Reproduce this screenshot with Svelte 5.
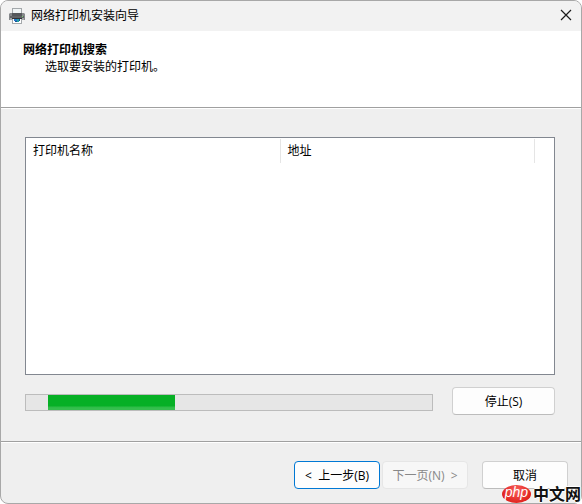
<script>
  let printers = $state([]);
  let searching = $state(true);
  let offset = $state(22);

  const chunk = 127;
  const track = 406;

  function stopSearch() {
    searching = false;
  }
</script>

<div class="window">
  <header class="titlebar">
    <svg class="app-icon" viewBox="0 0 16 16" width="16" height="16" aria-hidden="true">
      <rect x="3.5" y="0.5" width="9" height="6" fill="#f1f5f6" stroke="#a3a8ab" />
      <path d="M1 5h2v1h10V5h2l1 1v6H0V6z" fill="#85888b" />
      <path d="M3 5h10v3H3z" fill="#55585b" />
      <path d="M1 8h14v2H1z" fill="#606366" />
      <path d="M1 10h14v2H1z" fill="#a3a6a8" />
      <path d="M3 10h10v1H3z" fill="#303336" />
      <path d="M3 11h10v5H3z" fill="#a5a9ac" />
      <path d="M4 11h8v4H4z" fill="#fff" />
      <path d="M5 11h3v2H5z" fill="#2375c9" />
      <path d="M8 11h2v3H8z" fill="#24a1a0" />
      <path d="M6 13h2v1H6zM10 11h1v2h-1z" fill="#194f91" />
      <path d="M13 8h1v1h-1z" fill="#77d36f" />
    </svg>
    <span class="title">网络打印机安装向导</span>
    <button class="close" aria-label="关闭">
      <svg viewBox="0 0 12 12" width="12" height="12" aria-hidden="true">
        <path d="M1 1l10 10M11 1L1 11" stroke="#1a1a1a" stroke-width="1.2" fill="none" />
      </svg>
    </button>
  </header>

  <section class="heading">
    <h1>网络打印机搜索</h1>
    <p>选取要安装的打印机。</p>
  </section>

  <main>
    <div class="list">
      <table>
        <thead>
          <tr>
            <th>打印机名称</th>
            <th>地址</th>
            <td class="rest"></td>
          </tr>
        </thead>
        <tbody>
          {#each printers as printer}
            <tr>
              <td>{printer.name}</td>
              <td>{printer.address}</td>
              <td></td>
            </tr>
          {/each}
        </tbody>
      </table>
    </div>

    <div class="search-row">
      <div class="progress" role="progressbar" aria-label="正在搜索">
        {#if searching}
          <div
            class="chunk"
            style="margin-left: {(offset / track) * 100}%; width: {(chunk / track) * 100}%"
          ></div>
        {/if}
      </div>
      <button class="btn stop" onclick={stopSearch}>停止(S)</button>
    </div>
  </main>

  <footer>
    <button class="btn default">&lt;&nbsp; 上一步(B)</button>
    <button class="btn next" disabled>下一页(N)&nbsp; &gt;</button>
    <button class="btn cancel">取消</button>
  </footer>

  <div class="watermark">
    <span class="php">php</span>
    <span class="site">中文网</span>
  </div>
</div>

<style>
  :global(body) {
    background: #fff;
  }

  .window {
    position: relative;
    box-sizing: border-box;
    min-height: 100vh;
    display: flex;
    flex-direction: column;
    background: #efefef;
    border: 1px solid #a8a8a8;
    border-radius: 8px;
    color: #000;
    font-family: "Open Sans", "Noto Sans CJK SC", sans-serif;
    font-size: 12px;
    line-height: 17px;
  }

  .titlebar {
    display: flex;
    align-items: center;
    height: 30px;
    padding-left: 8px;
    background: #f2f2f2;
    border-radius: 7px 7px 0 0;
  }

  .app-icon {
    margin-right: 6px;
  }

  .title {
    flex: 1;
    padding-bottom: 2px;
  }

  .close {
    display: flex;
    align-items: center;
    justify-content: center;
    width: 30px;
    height: 30px;
    padding: 0 0 2px;
    border: none;
    background: none;
  }

  .heading {
    min-height: 66px;
    padding: 10px 22px 0;
    background: #fff;
    border-bottom: 1px solid #a0a0a0;
    box-shadow: 0 1px 0 #fff;
  }

  h1 {
    margin: 0;
    font-size: 12px;
    font-weight: 700;
  }

  p {
    margin: 0;
    padding-left: 22px;
  }

  main {
    flex: 1;
    display: flex;
    flex-direction: column;
    gap: 12px;
    padding: 29px 26px 26px 24px;
  }

  .list {
    flex: 1;
    background: #fff;
    border: 1px solid #828790;
  }

  table {
    width: 100%;
    margin-top: 1px;
    border-collapse: separate;
    border-spacing: 0;
    table-layout: fixed;
  }

  th {
    height: 22px;
    padding: 0 7px 2px;
    border-right: 1px solid #e5e5e5;
    font-weight: 400;
    text-align: left;
  }

  .rest {
    width: 19px;
    padding: 0;
  }

  .search-row {
    display: flex;
    align-items: center;
    gap: 19px;
  }

  .progress {
    flex: 1;
    height: 15px;
    margin-top: 2px;
    border: 1px solid #bcbcbc;
    background: #e6e6e6;
  }

  .chunk {
    height: 100%;
    background: linear-gradient(#06b025 70%, #35bf4d 85%);
  }

  .btn {
    box-sizing: border-box;
    width: 86px;
    height: 28px;
    padding: 0;
    border: 1px solid #d0d0d0;
    border-bottom-color: #bcbcbc;
    border-radius: 4px;
    background: #fdfdfd;
    color: #000;
    font: inherit;
  }

  .stop {
    width: 103px;
  }

  .default {
    border-color: #0078d4;
  }

  .btn:disabled {
    border-color: #e6e6e6;
    background: #f7f7f7;
    color: #888;
  }

  footer {
    display: flex;
    justify-content: flex-end;
    padding: 19px 13px 14px;
    border-top: 1px solid #a0a0a0;
    box-shadow: inset 0 1px 0 #fff;
  }

  .next {
    margin: 0 14px 0 2px;
  }

  .watermark {
    position: absolute;
    right: 0;
    bottom: 0;
    display: flex;
    align-items: center;
    gap: 2px;
    height: 18px;
    pointer-events: none;
  }

  .php {
    width: 29px;
    height: 18px;
    border-radius: 50%;
    background: radial-gradient(ellipse at 50% 30%, #f8605c, #e0201c 75%);
    color: #fff;
    font: italic 400 14px/15px "Liberation Sans", sans-serif;
    text-align: center;
  }

  .site {
    padding-bottom: 2px;
    color: #111;
    font: 700 16px/16px "Noto Sans CJK SC", sans-serif;
    text-shadow: 1px 0 #fff, -1px 0 #fff, 0 1px #fff, 0 -1px #fff;
  }
</style>
